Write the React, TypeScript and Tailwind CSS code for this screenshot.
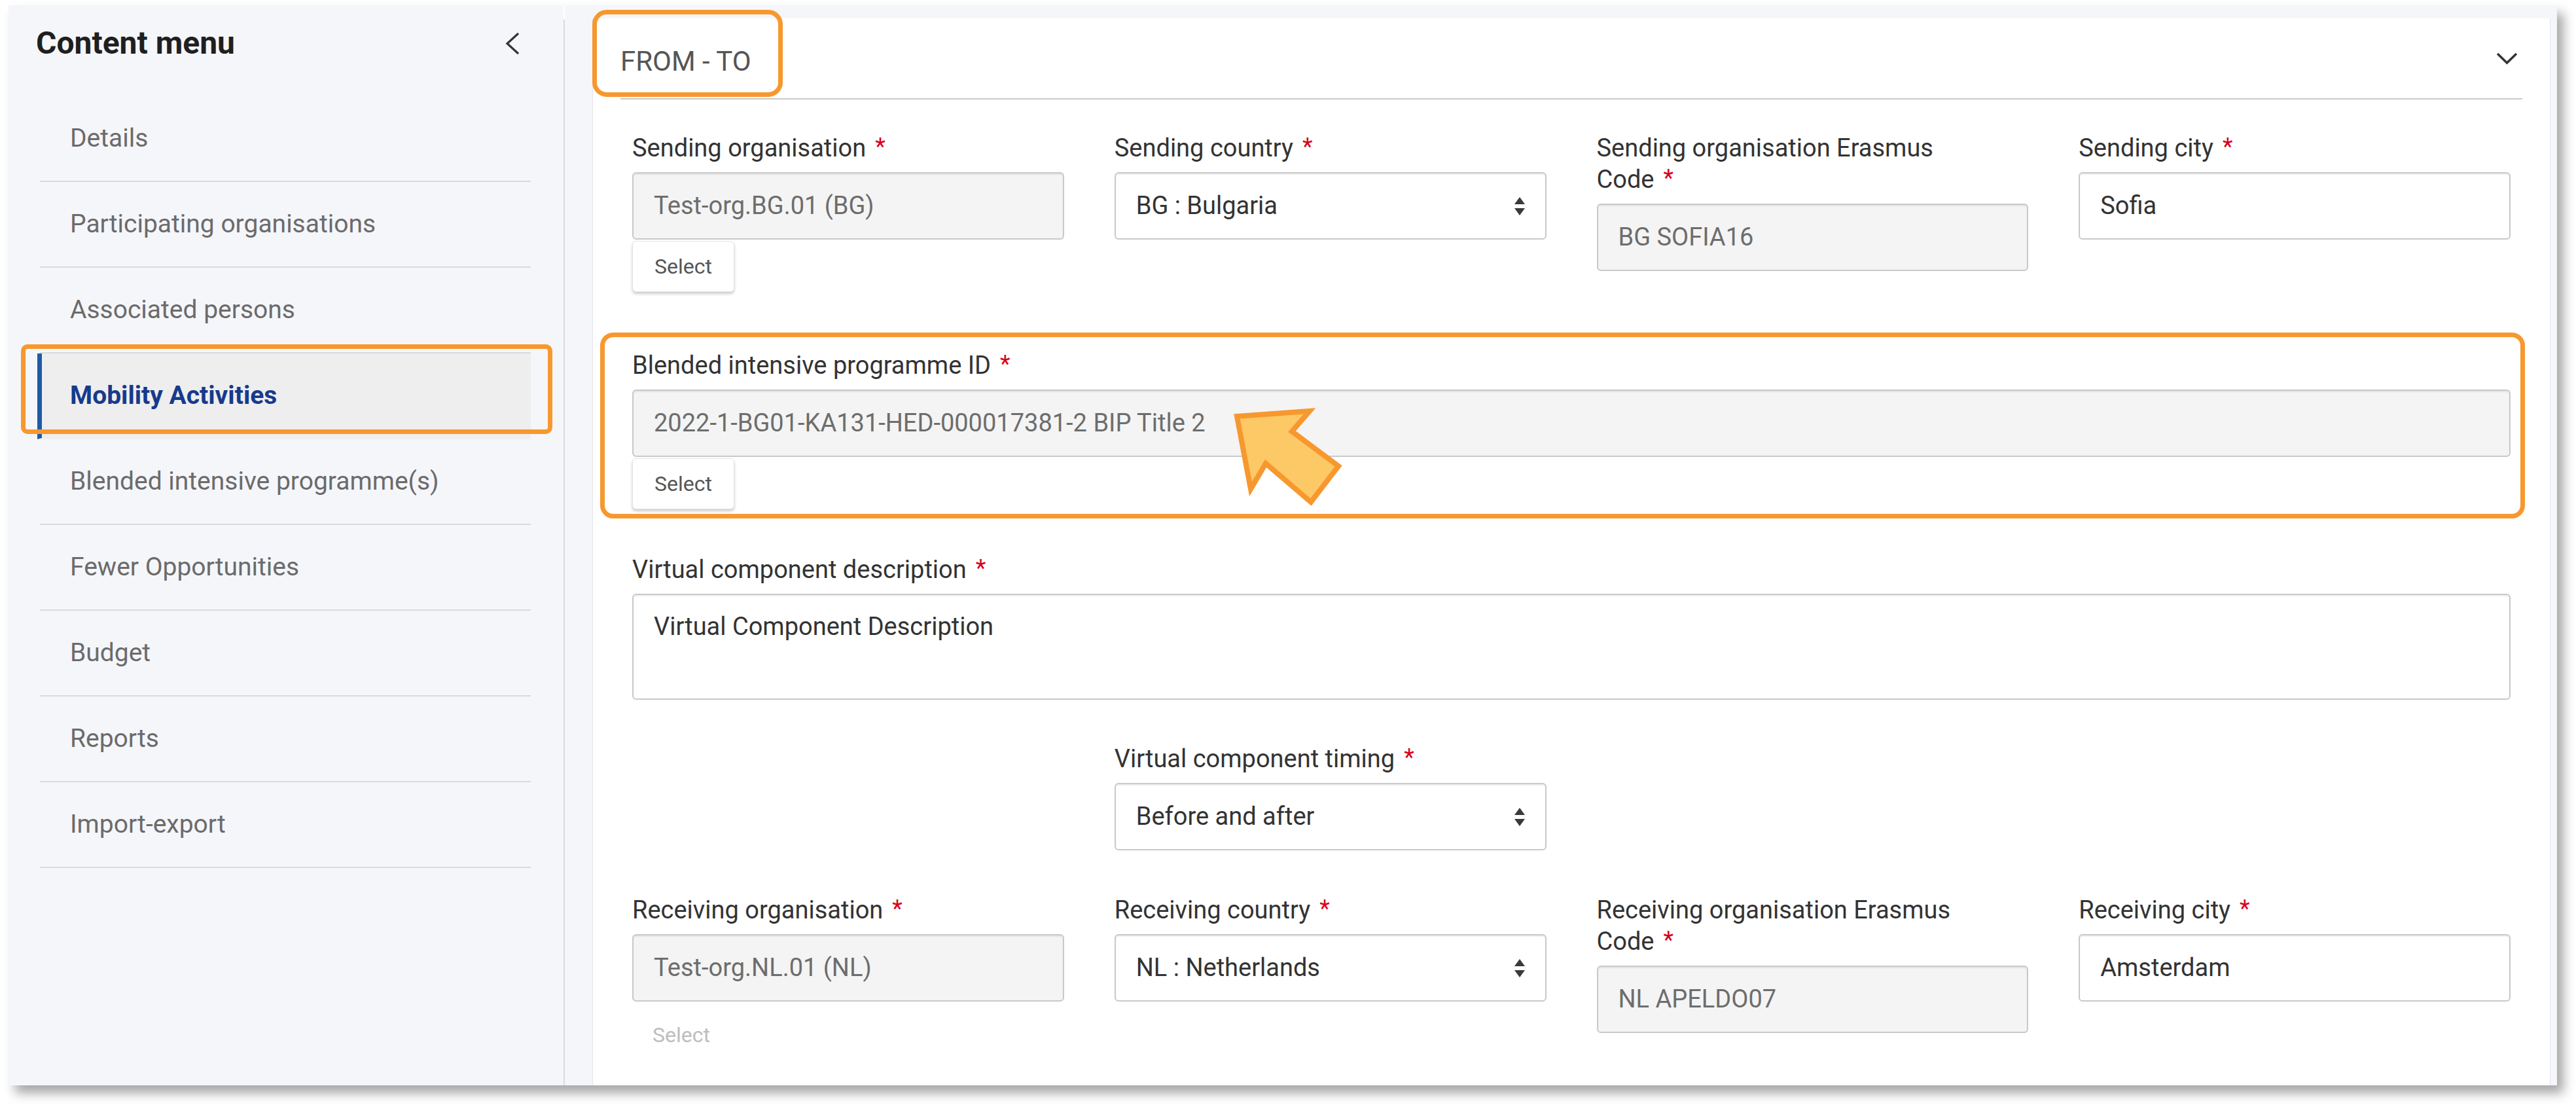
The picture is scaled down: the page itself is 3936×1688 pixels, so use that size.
import type { ReactNode } from 'react';

type Kind = 'readonly' | 'select' | 'text';

interface FieldProps {
  label: string;
  value: string;
  kind: Kind;
  action?: 'button' | 'disabled';
  className?: string;
}

const menu = [
  'Details',
  'Participating organisations',
  'Associated persons',
  'Mobility Activities',
  'Blended intensive programme(s)',
  'Fewer Opportunities',
  'Budget',
  'Reports',
  'Import-export',
];

const ACTIVE = 'Mobility Activities';

// The last word stays glued to the required mark so a wrapped label keeps "Code *" together.
function Label({ text }: { text: string }) {
  const cut = text.lastIndexOf(' ');
  const head = cut >= 0 ? text.slice(0, cut + 1) : '';
  const tail = text.slice(cut + 1);
  return (
    <p className="mb-[13px] w-full pr-[40px] text-[38px] leading-[48px] text-[#333333]">
      {head}
      <span className="whitespace-nowrap">
        {tail}
        <span className="relative -top-[3px] ml-[14px] text-[36px] leading-none text-[#d9001b]">*</span>
      </span>
    </p>
  );
}

function UpDown() {
  return (
    <svg width="18" height="28" viewBox="0 0 18 28" className="shrink-0" aria-hidden="true">
      <path d="M1 11 L9 0 L17 11 Z" fill="#3a3a3a" />
      <path d="M1 17 L9 28 L17 17 Z" fill="#3a3a3a" />
    </svg>
  );
}

function Box({ kind, children }: { kind: Kind; children: ReactNode }) {
  const tone = kind === 'readonly' ? 'bg-[#f4f4f4] text-[#6d6d6d]' : 'bg-white text-[#333333]';
  return (
    <div
      className={`flex h-[103px] w-full items-center justify-between rounded-[6px] border-2 border-[#c9c9c9] pl-[31px] text-[38px] shadow-[inset_0_2px_2px_rgba(0,0,0,0.07)] ${kind === 'select' ? 'pr-[30px]' : 'pr-[31px]'} ${tone}`}
    >
      <span className="truncate">{children}</span>
      {kind === 'select' && <UpDown />}
    </div>
  );
}

function SelectButton() {
  return (
    <button className="mt-[2px] h-[78px] w-[156px] rounded-[6px] border border-[#e4e4e4] bg-white text-[32px] text-[#555555] shadow-[0_3px_4px_rgba(0,0,0,0.2)]">
      Select
    </button>
  );
}

function Field({ label, value, kind, action, className = '' }: FieldProps) {
  return (
    <div className={`flex flex-col items-start ${className}`}>
      <Label text={label} />
      <Box kind={kind}>{value}</Box>
      {action === 'button' && <SelectButton />}
      {action === 'disabled' && (
        <span className="mt-[12px] flex h-[78px] items-center px-[31px] text-[32px] text-[#bdbdbd]">
          Select
        </span>
      )}
    </div>
  );
}

export default function App() {
  return (
    <div className="relative h-[1688px] w-[3936px] overflow-hidden bg-white pl-[13px] pt-[8px] font-[Roboto,Arial,sans-serif]">
      <div className="flex h-[1650px] w-[3894px] shadow-[10px_12px_16px_rgba(0,0,0,0.35)]">
        {/* content menu */}
        <aside className="flex w-[848px] shrink-0 flex-col bg-[#f5f6fa]">
          <div className="flex items-center justify-between pl-[42px] pr-[66px] pt-[30px]">
            <h2 className="text-[48px] font-bold leading-[56px] text-[#1f1f1f]">Content menu</h2>
            <svg width="23" height="35" viewBox="0 0 23 35" aria-hidden="true">
              <path d="M20 2 L3 17.5 L20 33" fill="none" stroke="#333" strokeWidth="3.2" />
            </svg>
          </div>
          <nav className="ml-[48px] mr-[50px] mt-[53px]">
            {menu.map((item) =>
              item === ACTIVE ? (
                <div
                  key={item}
                  className="-ml-[4px] flex h-[131px] items-center border-b-2 border-l-[7px] border-b-[#eeeeee] border-l-[#1f5aa6] bg-[#eeeeee] pl-[43px] text-[39px] font-bold text-[#173a8c]"
                >
                  {item}
                </div>
              ) : (
                <div
                  key={item}
                  className="flex h-[131px] items-center border-b-2 border-[#d8dade] pl-[46px] text-[39px] text-[#6b6b6b]"
                >
                  {item}
                </div>
              ),
            )}
          </nav>
        </aside>
        <div className="mt-[22px] w-[2px] shrink-0 bg-[#d8dae0]" />

        {/* form */}
        <main className="flex flex-1 bg-[#f5f6fa] pl-[42px] pr-[10px] pt-[20px]">
          <section className="flex-1 border-x border-[#e3e5ea] bg-white px-[42px]">
            <header className="flex h-[124px] items-center justify-between border-b-2 border-[#c9c9c9]">
              <span className="pt-[10px] text-[42px] leading-[50px] text-[#555555]">FROM - TO</span>
              <svg width="33" height="19" viewBox="0 0 33 19" className="mr-[7px]" aria-hidden="true">
                <path d="M2 2 L16.5 16 L31 2" fill="none" stroke="#333" strokeWidth="3.5" />
              </svg>
            </header>

            <div className="px-[18px] pt-[50px]">
              <div className="grid grid-cols-4 items-start gap-x-[77px]">
                <Field label="Sending organisation" value="Test-org.BG.01 (BG)" kind="readonly" action="button" />
                <Field label="Sending country" value="BG : Bulgaria" kind="select" />
                <Field label="Sending organisation Erasmus Code" value="BG SOFIA16" kind="readonly" />
                <Field label="Sending city" value="Sofia" kind="text" />
              </div>

              <Field
                className="mt-[88px]"
                label="Blended intensive programme ID"
                value="2022-1-BG01-KA131-HED-000017381-2 BIP Title 2"
                kind="readonly"
                action="button"
              />

              <div className="mt-[68px]">
                <Label text="Virtual component description" />
                <div className="h-[162px] w-full rounded-[6px] border-2 border-[#c9c9c9] px-[31px] pt-[24px] text-[38px] leading-[48px] text-[#333333] shadow-[inset_0_2px_2px_rgba(0,0,0,0.07)]">
                  Virtual Component Description
                </div>
              </div>

              <div className="mt-[66px] grid grid-cols-4 items-start gap-x-[77px]">
                <Field className="col-start-2" label="Virtual component timing" value="Before and after" kind="select" />
              </div>

              <div className="mt-[67px] grid grid-cols-4 items-start gap-x-[77px]">
                <Field label="Receiving organisation" value="Test-org.NL.01 (NL)" kind="readonly" action="disabled" />
                <Field label="Receiving country" value="NL : Netherlands" kind="select" />
                <Field label="Receiving organisation Erasmus Code" value="NL APELDO07" kind="readonly" />
                <Field label="Receiving city" value="Amsterdam" kind="text" />
              </div>
            </div>
          </section>
        </main>
      </div>

      {/* annotation overlays */}
      <div className="pointer-events-none absolute left-[32px] top-[526px] h-[137px] w-[812px] rounded-[10px] border-[7px] border-[#f7982f]" />
      <div className="pointer-events-none absolute left-[905px] top-[15px] h-[133px] w-[291px] rounded-[22px] border-[7px] border-[#f7982f]" />
      <div className="pointer-events-none absolute left-[917px] top-[508px] h-[284px] w-[2941px] rounded-[20px] border-[7px] border-[#f7982f]" />
      <svg
        className="pointer-events-none absolute left-[1870px] top-[610px]"
        width="200"
        height="180"
        viewBox="0 0 200 180"
        aria-hidden="true"
      >
        <polygon
          points="20,26 131,18 104,49 175,102 133,157 64,98 41,137"
          fill="#fdc866"
          stroke="#f7982f"
          strokeWidth="8"
          strokeLinejoin="miter"
        />
      </svg>
    </div>
  );
}
